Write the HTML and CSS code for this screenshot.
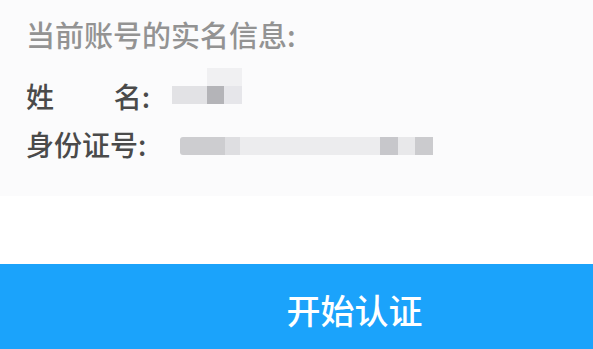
FILE: index.html
```html
<!DOCTYPE html>
<html lang="zh-CN">
<head>
<meta charset="utf-8">
<link rel="stylesheet" href="styles.css">
</head>
<body>
<div class="page">
  <section class="info">
    <div class="title">当前账号的实名信息:</div>
    <div class="row first">
      <div class="label"><span>姓</span><span>名:</span></div>
      <div class="mosaic name">
        <div class="top"></div>
        <div class="cells">
          <i class="c1"></i><i class="c2"></i><i class="c3"></i>
        </div>
      </div>
    </div>
    <div class="row">
      <div class="label"><span>身份证号:</span></div>
      <div class="mosaic id">
        <div class="cells">
          <i class="d1"></i><i class="d2"></i><i class="d3"></i><i class="d4"></i><i class="d5"></i><i class="d6"></i>
        </div>
      </div>
    </div>
  </section>
  <div class="spacer"></div>
  <button class="start">开始认证</button>
</div>
</body>
</html>
```

FILE: styles.css
```css
* { box-sizing: border-box; }
html, body { margin: 0; padding: 0; }
body {
  width: 593px;
  height: 349px;
  overflow: hidden;
  background: #ffffff;
  font-family: "Noto Sans CJK SC", "Noto Sans", sans-serif;
}
.page {
  display: flex;
  flex-direction: column;
  height: 349px;
}
.info {
  background: #fbfbfc;
  height: 196px;
  padding: 15px 0 0 26px;
}
.title {
  font-size: 29px;
  font-weight: 500;
  line-height: 38px;
  color: #939393;
}
.row {
  display: flex;
  align-items: center;
  height: 48px;
}
.row.first { margin-top: 19px; }
.label {
  width: 124px;
  display: flex;
  justify-content: space-between;
  font-size: 28px;
  font-weight: 500;
  line-height: 38px;
  color: #4a4a4a;
}
.mosaic { margin-left: 22px; }
.mosaic .cells { display: flex; height: 18px; }
.mosaic i { display: block; height: 18px; }
.name { position: relative; margin-top: -2px; }
.name .top {
  position: absolute;
  left: 35px;
  top: -18px;
  width: 35px;
  height: 18px;
  background: #f0f0f2;
}
.name .c1 { width: 35px; background: #e2e2e5; }
.name .c2 { width: 17px; background: #b4b4b8; }
.name .c3 { width: 18px; background: #e6e6ea; }
.id { margin-left: 30px; margin-top: 4px; }
.id .d1 { width: 45px; background: #cdcdd0; border-radius: 3px 0 0 3px; }
.id .d2 { width: 15px; background: #dedee1; }
.id .d3 { width: 140px; background: #ececee; }
.id .d4 { width: 18px; background: #c7c7cb; }
.id .d5 { width: 17px; background: #e8e8ea; }
.id .d6 { width: 18px; background: #cbcbce; }
.spacer { height: 68px; }
.start {
  flex: 1;
  border: 0;
  margin: 0;
  background: #1ba3fb;
  color: #ffffff;
  font-family: "Noto Sans CJK SC", "Noto Sans", sans-serif;
  font-size: 34px;
  font-weight: 500;
  padding: 6px 0 0 116px;
  display: flex;
  align-items: center;
  justify-content: center;
}
```
